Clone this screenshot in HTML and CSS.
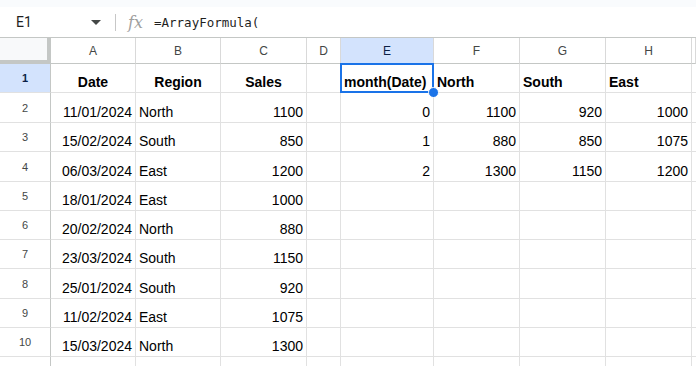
FILE: index.html
```html
<!DOCTYPE html>
<html>

<head>
    <title>Sheet</title>

    <link rel="stylesheet" href="styles.css">

</head>

<body>
    <div class="topband"></div>

    <div class="formula-bar">
        <div class="name-box">
            <span>E1</span>
            <svg class="caret" width="10" height="5" viewBox="0 0 10 5"><path d="M0 0h10L5 5z" fill="#444746"/></svg>
        </div>
        <div class="divider"></div>
        <span class="fx">fx</span>
        <span class="formula">=ArrayFormula(</span>
    </div>

    <div class="sheet">
        <div class="row head">
            <div class="corner"></div>
            <div class="col-h">A</div>
            <div class="col-h">B</div>
            <div class="col-h">C</div>
            <div class="col-h">D</div>
            <div class="col-h active">E</div>
            <div class="col-h">F</div>
            <div class="col-h">G</div>
            <div class="col-h">H</div>
            <div class="col-h"></div>
        </div>

        <div class="row tall-a">
            <div class="row-h active">1</div>
            <div class="cell b center">Date</div>
            <div class="cell b center">Region</div>
            <div class="cell b center">Sales</div>
            <div class="cell"></div>
            <div class="cell b selected">month(Date)</div>
            <div class="cell b">North</div>
            <div class="cell b">South</div>
            <div class="cell b">East</div>
            <div class="cell"></div>
        </div>

        <div class="row tall-b">
            <div class="row-h">2</div>
            <div class="cell num">11/01/2024</div>
            <div class="cell">North</div>
            <div class="cell num">1100</div>
            <div class="cell"></div>
            <div class="cell num">0</div>
            <div class="cell num">1100</div>
            <div class="cell num">920</div>
            <div class="cell num">1000</div>
            <div class="cell"></div>
        </div>

        <div class="row tall-a">
            <div class="row-h">3</div>
            <div class="cell num">15/02/2024</div>
            <div class="cell">South</div>
            <div class="cell num">850</div>
            <div class="cell"></div>
            <div class="cell num">1</div>
            <div class="cell num">880</div>
            <div class="cell num">850</div>
            <div class="cell num">1075</div>
            <div class="cell"></div>
        </div>

        <div class="row tall-b">
            <div class="row-h">4</div>
            <div class="cell num">06/03/2024</div>
            <div class="cell">East</div>
            <div class="cell num">1200</div>
            <div class="cell"></div>
            <div class="cell num">2</div>
            <div class="cell num">1300</div>
            <div class="cell num">1150</div>
            <div class="cell num">1200</div>
            <div class="cell"></div>
        </div>

        <div class="row tall-a">
            <div class="row-h">5</div>
            <div class="cell num">18/01/2024</div>
            <div class="cell">East</div>
            <div class="cell num">1000</div>
            <div class="cell"></div><div class="cell"></div><div class="cell"></div><div class="cell"></div><div class="cell"></div><div class="cell"></div>
        </div>

        <div class="row tall-a">
            <div class="row-h">6</div>
            <div class="cell num">20/02/2024</div>
            <div class="cell">North</div>
            <div class="cell num">880</div>
            <div class="cell"></div><div class="cell"></div><div class="cell"></div><div class="cell"></div><div class="cell"></div><div class="cell"></div>
        </div>

        <div class="row tall-a">
            <div class="row-h">7</div>
            <div class="cell num">23/03/2024</div>
            <div class="cell">South</div>
            <div class="cell num">1150</div>
            <div class="cell"></div><div class="cell"></div><div class="cell"></div><div class="cell"></div><div class="cell"></div><div class="cell"></div>
        </div>

        <div class="row tall-b">
            <div class="row-h">8</div>
            <div class="cell num">25/01/2024</div>
            <div class="cell">South</div>
            <div class="cell num">920</div>
            <div class="cell"></div><div class="cell"></div><div class="cell"></div><div class="cell"></div><div class="cell"></div><div class="cell"></div>
        </div>

        <div class="row tall-a">
            <div class="row-h">9</div>
            <div class="cell num">11/02/2024</div>
            <div class="cell">East</div>
            <div class="cell num">1075</div>
            <div class="cell"></div><div class="cell"></div><div class="cell"></div><div class="cell"></div><div class="cell"></div><div class="cell"></div>
        </div>

        <div class="row tall-a">
            <div class="row-h">10</div>
            <div class="cell num">15/03/2024</div>
            <div class="cell">North</div>
            <div class="cell num">1300</div>
            <div class="cell"></div><div class="cell"></div><div class="cell"></div><div class="cell"></div><div class="cell"></div><div class="cell"></div>
        </div>

        <div class="row tall-a">
            <div class="row-h"></div>
            <div class="cell"></div><div class="cell"></div><div class="cell"></div><div class="cell"></div><div class="cell"></div><div class="cell"></div><div class="cell"></div><div class="cell"></div><div class="cell"></div>
        </div>
    </div>

</body>

</html>
```

FILE: styles.css
```css
* {
    box-sizing: border-box;
}

body {
    margin: 0;
    overflow: hidden;

    background: #fff;
    color: #000;

    font-family: "Liberation Sans", Arial, sans-serif;
    font-size: 14px;
}

.topband {
    height: 7px;
    background: #f9fbfd;
}

/* formula bar */

.formula-bar {
    display: flex;
    align-items: center;

    height: 31px;

    border-bottom: 1px solid #c4c7c5;
}

.name-box {
    display: flex;
    align-items: center;
    justify-content: space-between;

    width: 115px;
    padding: 0 14px 0 16px;

    font-family: Roboto, "Liberation Sans", sans-serif;
    font-size: 14px;
    color: #1f1f1f;
}

.divider {
    width: 1px;
    height: 17px;
    background: #c7c7c7;
}

.fx {
    margin-left: 12px;
    width: 26px;

    font-family: "DejaVu Serif", serif;
    font-style: italic;
    font-size: 16px;
    color: #a0a0a0;
}

.formula {
    font-family: "DejaVu Sans Mono", monospace;
    font-size: 12.5px;
    color: #1f1f1f;
}

/* grid */

.row {
    display: grid;
    grid-template-columns: 51px 85px 85px 86px 34px 93px 86px 86px 86px 1fr;
}

.head {
    height: 26px;
}

.tall-a {
    height: 29px;
}

.tall-b {
    height: 30px;
}

.corner {
    background: #f8f9fa;
    border-right: 4px solid #c4c7c5;
    border-bottom: 4px solid #c4c7c5;
}

.col-h {
    display: flex;
    align-items: center;
    justify-content: center;

    border-right: 1px solid #d9d9d9;
    border-bottom: 1px solid #c4c7c5;

    font-size: 12px;
    color: #444746;
}

.row-h {
    display: flex;
    align-items: center;
    justify-content: center;

    border-right: 1px solid #c4c7c5;
    border-bottom: 1px solid #e1e1e1;

    font-size: 11px;
    color: #444746;
}

.col-h.active,
.row-h.active {
    background: #d3e3fd;
    color: #0b1f45;
}

.row-h.active {
    font-weight: bold;
}

.cell {
    display: flex;
    align-items: flex-end;

    padding: 0 3px 1px 3px;

    border-right: 1px solid #e1e1e1;
    border-bottom: 1px solid #e1e1e1;

    line-height: 17px;
    white-space: nowrap;
}

.cell.b {
    font-weight: bold;
}

.cell.center {
    justify-content: center;
}

.cell.num {
    justify-content: flex-end;
}

.selected {
    position: relative;
}

.selected::before {
    content: "";
    position: absolute;
    left: -1px;
    top: -1px;
    right: -1px;
    bottom: -1px;

    border: 2px solid #1a73e8;
}

.selected::after {
    content: "";
    position: absolute;
    right: -6px;
    bottom: -6px;

    width: 9px;
    height: 9px;

    background: #1a73e8;
    border: 1px solid #fff;
    border-radius: 50%;
}
```
